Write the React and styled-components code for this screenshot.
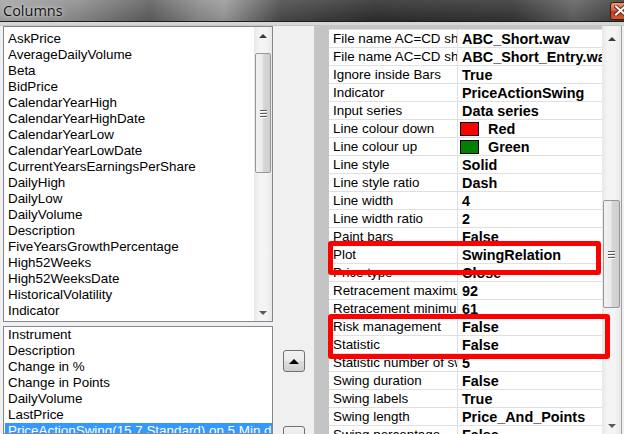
import styled, { createGlobalStyle } from "styled-components";

const GlobalStyle = createGlobalStyle`
  html, body {
    margin: 0;
    padding: 0;
    background: #f0f0f0;
  }
  body {
    font-family: "Liberation Sans", Arial, sans-serif;
    font-size: 13.4px;
    color: #000;
  }
`;

const Window = styled.div`
  width: 624px;
  height: 434px;
  overflow: hidden;
  display: flex;
  flex-direction: column;
  background: #f0f0f0;
`;

const TitleBar = styled.div`
  height: 21px;
  flex: none;
  display: flex;
  align-items: center;
  justify-content: space-between;
  overflow: hidden;
  border-bottom: 1px solid #1e1e1e;
  background:
    linear-gradient(180deg, rgba(255, 255, 255, 0.12), rgba(0, 0, 0, 0.08)),
    linear-gradient(90deg, #a4a4a4 0%, #8e8e8e 12%, #5e5e5e 24%, #8c8c8c 32%, #9a9a9a 36%, #4a4a4a 45%, #2e2e2e 60%, #343434 82%, #606060 92%, #3a3a3a 100%);
`;

const Title = styled.span`
  font-family: "Open Sans", "Noto Sans", sans-serif;
  font-size: 14.5px;
  padding-left: 3px;
  color: #111;
  text-shadow: 0 0 6px rgba(255, 255, 255, 0.8), 0 0 2px rgba(255, 255, 255, 0.6);
`;

const CloseButton = styled.div`
  width: 40px;
  height: 18px;
  margin-right: -26px;
  border: 1px solid #4a1a10;
  border-radius: 3px;
  background: linear-gradient(180deg, #e89a7c 0%, #d8653f 45%, #c0381c 55%, #d45a2e 100%);
  display: flex;
  align-items: center;
  padding-left: 3px;
  box-sizing: border-box;
`;

const Frame = styled.div`
  height: 3px;
  flex: none;
  background: #d6d6d6;
  border-bottom: 1px solid #c4c4c4;
`;

const Body = styled.div`
  flex: 1;
  display: flex;
  padding-left: 3px;
  min-height: 0;
`;

const LeftColumn = styled.div`
  width: 270px;
  display: flex;
  flex-direction: column;
  gap: 4px;
`;

const ListBox = styled.div`
  height: ${(p) => (p.$height ? `${p.$height}px` : "auto")};
  flex: ${(p) => (p.$height ? "none" : "1")};
  box-sizing: border-box;
  border: 1px solid #828790;
  background: #fff;
  display: flex;
  overflow: hidden;
`;

const Items = styled.div`
  flex: 1;
  min-width: 0;
  padding-top: ${(p) => p.$top}px;
  padding-left: 1px;
`;

const Item = styled.div`
  height: 16px;
  line-height: 16px;
  padding-left: 3px;
  white-space: nowrap;
  overflow: hidden;
  background: ${(p) => (p.$selected ? "#3399ff" : "transparent")};
  color: ${(p) => (p.$selected ? "#fff" : "#000")};
`;

const ScrollBar = styled.div`
  width: 18px;
  flex: none;
  display: flex;
  flex-direction: column;
  background: linear-gradient(90deg, #e8e8e8, #f4f4f4 30%, #f4f4f4 70%, #e8e8e8);
`;

const Arrow = styled.div`
  height: 17px;
  flex: none;
  display: flex;
  align-items: center;
  justify-content: center;

  &::after {
    content: "";
    width: 0;
    height: 0;
    border-left: 4px solid transparent;
    border-right: 4px solid transparent;
    ${(p) => (p.$down ? "border-top: 4px solid #5a5a5a;" : "border-bottom: 4px solid #3a3a3a;")}
  }
`;

const Track = styled.div`
  flex: 1;
  display: flex;
  flex-direction: column;
`;

const Thumb = styled.div`
  margin: ${(p) => p.$top}px 1px 0;
  height: ${(p) => p.$size}px;
  box-sizing: border-box;
  border: 1px solid #979797;
  border-radius: 2px;
  background: linear-gradient(90deg, #f2f2f2 0%, #ebebeb 45%, #d6d6d6 55%, #cfcfcf 100%);
  display: flex;
  flex-direction: column;
  align-items: center;
  justify-content: center;
  gap: 2px;
`;

const Grip = styled.span`
  width: 7px;
  height: 1px;
  background: #5c5c5c;
  box-shadow: 0 1px 0 #fff;
`;

const ButtonColumn = styled.div`
  width: 41px;
  flex: none;
  display: flex;
  flex-direction: column;
  padding: 324px 0 0 10px;
  box-sizing: border-box;
  gap: 54px;
`;

const MoveButton = styled.div`
  width: 22px;
  height: 22px;
  flex: none;
  box-sizing: border-box;
  border: 1px solid #707070;
  border-radius: 3px;
  background: linear-gradient(180deg, #f2f2f2 0%, #ebebeb 50%, #dddddd 51%, #cfcfcf 100%);
  display: flex;
  align-items: center;
  justify-content: center;

  &::after {
    content: "";
    width: 0;
    height: 0;
    border-left: 5px solid transparent;
    border-right: 5px solid transparent;
    ${(p) => (p.$down ? "border-top: 5px solid #000;" : "border-bottom: 5px solid #000;")}
  }
`;

const PropertyGrid = styled.div`
  position: relative;
  flex: 1;
  display: flex;
  background: #f0f0f0;
  border-left: 1px solid #c8c8c8;
`;

const Margin = styled.div`
  width: 14px;
  flex: none;
  background: #c4c4c4;
`;

const Table = styled.div`
  width: 273px;
  flex: none;
  padding-top: 3px;
  background: linear-gradient(180deg, #c4c4c4 3px, #fff 3px);
`;

const Row = styled.div`
  display: flex;
  height: 18px;
  box-sizing: border-box;
  border-top: 1px solid #e0e0e0;
  background: #fff;
`;

const NameCell = styled.div`
  width: 129px;
  flex: none;
  box-sizing: border-box;
  padding-left: 4px;
  border-right: 1px solid #e0e0e0;
  line-height: 17px;
  white-space: nowrap;
  overflow: hidden;
`;

const ValueCell = styled.div`
  flex: 1;
  min-width: 0;
  display: flex;
  align-items: center;
  padding-left: ${(p) => (p.$swatch ? 2 : 4)}px;
  gap: 9px;
  font-size: 14.4px;
  font-weight: bold;
  white-space: nowrap;
  overflow: hidden;
`;

const Swatch = styled.span`
  width: 19px;
  height: 14px;
  flex: none;
  box-sizing: border-box;
  border: 1px solid #000;
  background: ${(p) => p.$color};
`;

const GridScroll = styled(ScrollBar)`
  width: 19px;
  padding-top: 4px;
  border-right: 1px solid #a0a0a0;
`;

const Highlight = styled.div`
  position: absolute;
  left: ${(p) => p.$left}px;
  top: ${(p) => p.$top}px;
  width: ${(p) => p.$width}px;
  height: ${(p) => p.$height}px;
  box-sizing: border-box;
  border: 5px solid #ff0000;
  border-radius: 3px;
  pointer-events: none;
`;

const available = [
  "AskPrice",
  "AverageDailyVolume",
  "Beta",
  "BidPrice",
  "CalendarYearHigh",
  "CalendarYearHighDate",
  "CalendarYearLow",
  "CalendarYearLowDate",
  "CurrentYearsEarningsPerShare",
  "DailyHigh",
  "DailyLow",
  "DailyVolume",
  "Description",
  "FiveYearsGrowthPercentage",
  "High52Weeks",
  "High52WeeksDate",
  "HistoricalVolatility",
  "Indicator",
];

const chosen = [
  "Instrument",
  "Description",
  "Change in %",
  "Change in Points",
  "DailyVolume",
  "LastPrice",
  "PriceActionSwing(15,7,Standard) on 5 Min data",
];

const properties = [
  ["File name AC=CD short", "ABC_Short.wav"],
  ["File name AC=CD short entry", "ABC_Short_Entry.wav"],
  ["Ignore inside Bars", "True"],
  ["Indicator", "PriceActionSwing"],
  ["Input series", "Data series"],
  ["Line colour down", "Red", "#ff0000"],
  ["Line colour up", "Green", "#008000"],
  ["Line style", "Solid"],
  ["Line style ratio", "Dash"],
  ["Line width", "4"],
  ["Line width ratio", "2"],
  ["Paint bars", "False"],
  ["Plot", "SwingRelation"],
  ["Price type", "Close"],
  ["Retracement maximum", "92"],
  ["Retracement minimum", "61"],
  ["Risk management", "False"],
  ["Statistic", "False"],
  ["Statistic number of swings", "5"],
  ["Swing duration", "False"],
  ["Swing labels", "True"],
  ["Swing length", "Price_And_Points"],
  ["Swing percentage", "False"],
];

function CloseIcon() {
  return (
    <svg width="13" height="11" viewBox="0 0 13 11">
      <path
        d="M2 1.5 L11 9.5 M11 1.5 L2 9.5"
        stroke="#6a2a1c"
        strokeWidth="4"
        strokeLinecap="square"
      />
      <path
        d="M2 1.5 L11 9.5 M11 1.5 L2 9.5"
        stroke="#fff"
        strokeWidth="2"
        strokeLinecap="square"
      />
    </svg>
  );
}

function VScroll({ thumbTop, thumbSize, as: Bar = ScrollBar }) {
  return (
    <Bar>
      <Arrow />
      <Track>
        <Thumb $top={thumbTop} $size={thumbSize}>
          <Grip />
          <Grip />
          <Grip />
        </Thumb>
      </Track>
      <Arrow $down />
    </Bar>
  );
}

export default function App() {
  return (
    <>
      <GlobalStyle />
      <Window>
        <TitleBar>
          <Title>Columns</Title>
          <CloseButton>
            <CloseIcon />
          </CloseButton>
        </TitleBar>
        <Frame />
        <Body>
          <LeftColumn>
            <ListBox $height={296}>
              <Items $top={4}>
                {available.map((name) => (
                  <Item key={name}>{name}</Item>
                ))}
              </Items>
              <VScroll thumbTop={9} thumbSize={120} />
            </ListBox>
            <ListBox>
              <Items $top={0}>
                {chosen.map((name, i) => (
                  <Item key={name} $selected={i === chosen.length - 1}>
                    {name}
                  </Item>
                ))}
              </Items>
            </ListBox>
          </LeftColumn>
          <ButtonColumn>
            <MoveButton />
            <MoveButton $down />
          </ButtonColumn>
          <PropertyGrid>
            <Margin />
            <Table>
              {properties.map(([name, value, color]) => (
                <Row key={name}>
                  <NameCell>{name}</NameCell>
                  <ValueCell $swatch={!!color}>
                    {color && <Swatch $color={color} />}
                    {value}
                  </ValueCell>
                </Row>
              ))}
            </Table>
            <VScroll as={GridScroll} thumbTop={153} thumbSize={108} />
            <Highlight $left={13} $top={215} $width={273} $height={34} />
            <Highlight $left={13} $top={288} $width={282} $height={45} />
          </PropertyGrid>
        </Body>
      </Window>
    </>
  );
}
